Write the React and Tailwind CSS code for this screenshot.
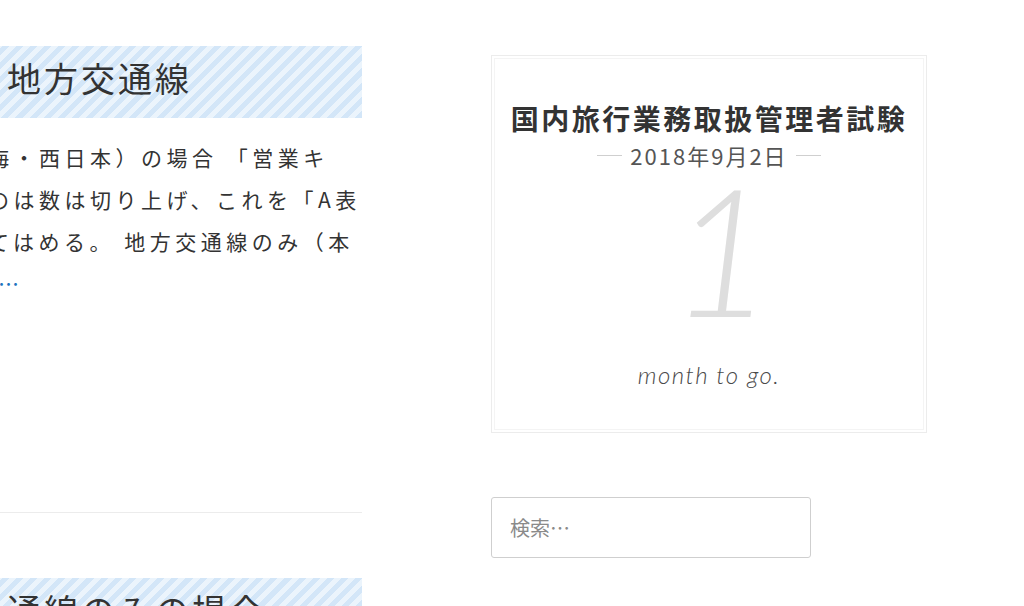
import React from 'react';

const jp = { fontFamily: '"Noto Sans CJK JP", "Noto Sans", sans-serif' };
const stripe =
  'bg-[repeating-linear-gradient(135deg,#d3e6f8_0px,#d3e6f8_5px,#ebf4fc_5px,#ebf4fc_10px)]';

const lines = [
  '海・西日本）の場合 「営業キ',
  'のは数は切り上げ、これを「A表',
  'てはめる。 地方交通線のみ（本',
];

function Band({ children }) {
  return (
    <div className={`h-[72px] flex items-center pl-[19px] ${stripe}`}>
      <span className="text-[34px] leading-none tracking-[3px] text-[#333] relative top-[-4px]">{children}</span>
    </div>
  );
}

export default function App() {
  return (
    <div className="w-[1024px] h-[606px] overflow-hidden bg-white" style={jp}>
      <div className="flex">
        {/* main column */}
        <div className="ml-[-12px] w-[374px] shrink-0 pt-[46px]">
          <Band>地方交通線</Band>
          <div className="mt-[18px] text-[21px] leading-[42px] tracking-[4.5px] text-[#333]">
            {lines.map((l, i) => (
              <div key={i} className="whitespace-nowrap">{l}</div>
            ))}
            <div className="pl-[10px] text-[#1e73be]">…</div>
          </div>
          <div className="mt-[208px] h-px bg-[#ececec] ml-[12px]" />
          <div className="mt-[65px]">
            <Band>通線のみの場合</Band>
          </div>
        </div>

        {/* sidebar */}
        <div className="ml-[129px] w-[436px] shrink-0 pt-[55px]">
          <div className="border border-[#ececec] p-[2px]">
            <div className="border border-[#f4f4f4] pt-[41px] pb-[39px] flex flex-col items-center">
              <div className="text-[28px] leading-[36px] font-bold tracking-[2.5px] text-[#333] whitespace-nowrap">
                国内旅行業務取扱管理者試験
              </div>
              <div className="mt-[5px] flex items-center gap-[8px] h-[28px]">
                <span className="w-[25px] h-px bg-[#cfcfcf]" />
                <span className="text-[22px] leading-[28px] tracking-[2px] text-[#555]">2018年9月2日</span>
                <span className="w-[25px] h-px bg-[#cfcfcf]" />
              </div>
              <div
                className="mt-[-10px] text-[178px] leading-none italic font-light text-[#dedede] pl-[26px]"
                style={{ fontFamily: 'Lato, sans-serif' }}
              >
                1
              </div>
              <div
                className="mt-[23px] text-[24px] leading-[30px] italic font-light tracking-[1.5px] text-[#4a4a4a]"
                style={{ fontFamily: 'Lato, sans-serif' }}
              >
                month to go.
              </div>
            </div>
          </div>
          <div className="mt-[64px] w-[320px] h-[61px] border border-[#cfcfcf] rounded-[3px] flex items-center pl-[18px]">
            <span className="text-[20px] text-[#8a8a8a]">検索…</span>
          </div>
        </div>
      </div>
    </div>
  );
}
